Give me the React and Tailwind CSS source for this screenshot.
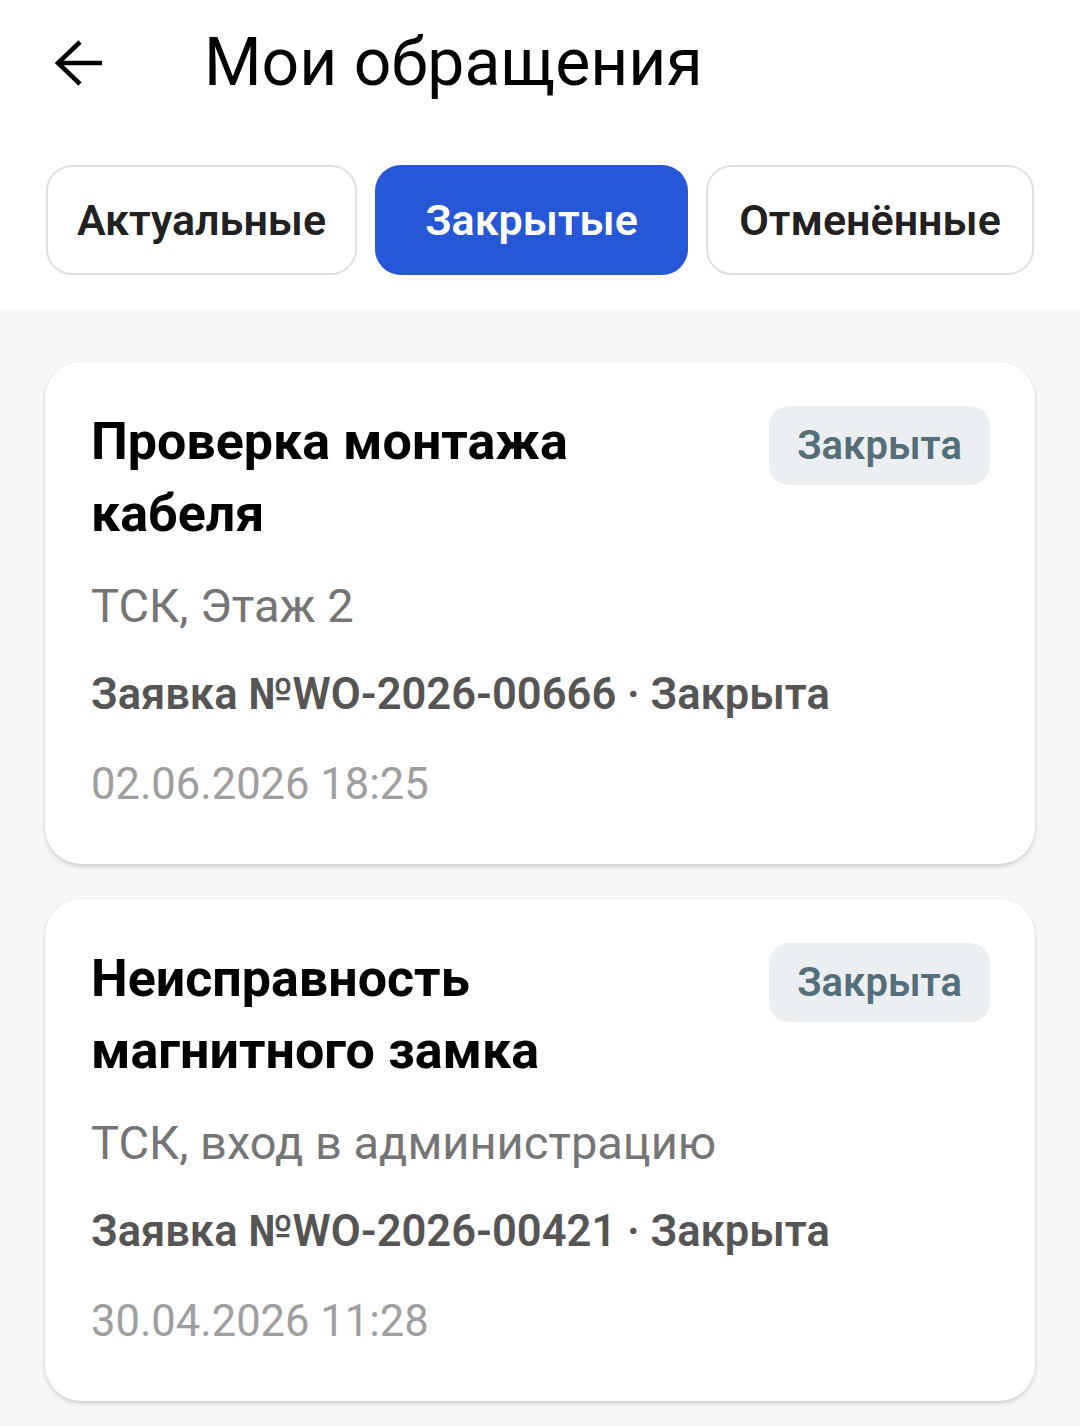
import React from 'react'

const tickets = [
  {
    title: 'Проверка монтажа кабеля',
    place: 'ТСК, Этаж 2',
    number: 'Заявка №WO-2026-00666 · Закрыта',
    date: '02.06.2026 18:25',
  },
  {
    title: 'Неисправность магнитного замка',
    place: 'ТСК, вход в администрацию',
    number: 'Заявка №WO-2026-00421 · Закрыта',
    date: '30.04.2026 11:28',
  },
]

const BackArrow = () => (
  <svg width="50" height="48" viewBox="0 0 50 48" fill="none" stroke="#000" strokeWidth="4.5">
    <path d="M4 24 H48" />
    <path d="M26 3 L4 24 L26 45" />
  </svg>
)

const TicketCard = ({ t }) => (
  <div className="bg-white rounded-[36px] shadow-[0_3px_4px_rgba(0,0,0,0.14),0_0_2px_rgba(0,0,0,0.08)] pl-[46px] pr-[45px] pt-[44px] pb-[51px]">
    <div className="flex items-start justify-between">
      <h2 className="text-[52px] leading-[72px] font-bold text-black w-[560px]">{t.title}</h2>
      <span className="shrink-0 bg-[#eceff1] text-[#546e7a] text-[40px] font-semibold rounded-[20px] w-[221px] h-[79px] flex items-center justify-center">
        Закрыта
      </span>
    </div>
    <div className="text-[47px] leading-[56px] text-[#757575] mt-[28px]">{t.place}</div>
    <div className="text-[43.5px] leading-[56px] font-semibold text-[#555555] mt-[33px]">{t.number}</div>
    <div className="text-[43.5px] leading-[56px] text-[#9e9e9e] mt-[34px]">{t.date}</div>
  </div>
)

export default function App() {
  return (
    <div className="w-[1080px] min-h-[1426px] bg-[#f7f7f7] font-['Roboto',sans-serif]">
      <div className="bg-white h-[310px]">
        <div className="flex items-center h-[126px] pl-[54px]">
          <BackArrow />
          <h1 className="ml-[100px] text-[66px] font-normal text-black leading-none">Мои обращения</h1>
        </div>
        <div className="flex gap-[18px] px-[46px] mt-[39px]">
          <button className="w-[311px] h-[110px] rounded-[26px] border-2 border-[#e0e0e0] bg-white text-[43px] font-semibold text-[#212121]">
            Актуальные
          </button>
          <button className="w-[313px] h-[110px] rounded-[26px] bg-[#2557d6] text-[43px] font-semibold text-white">
            Закрытые
          </button>
          <button className="w-[328px] h-[110px] rounded-[26px] border-2 border-[#e0e0e0] bg-white text-[43px] font-semibold text-[#212121]">
            Отменённые
          </button>
        </div>
      </div>
      <div className="flex flex-col gap-[35px] px-[45px] pt-[52px] pb-[24px]">
        {tickets.map((t) => (
          <TicketCard key={t.number} t={t} />
        ))}
      </div>
    </div>
  )
}
